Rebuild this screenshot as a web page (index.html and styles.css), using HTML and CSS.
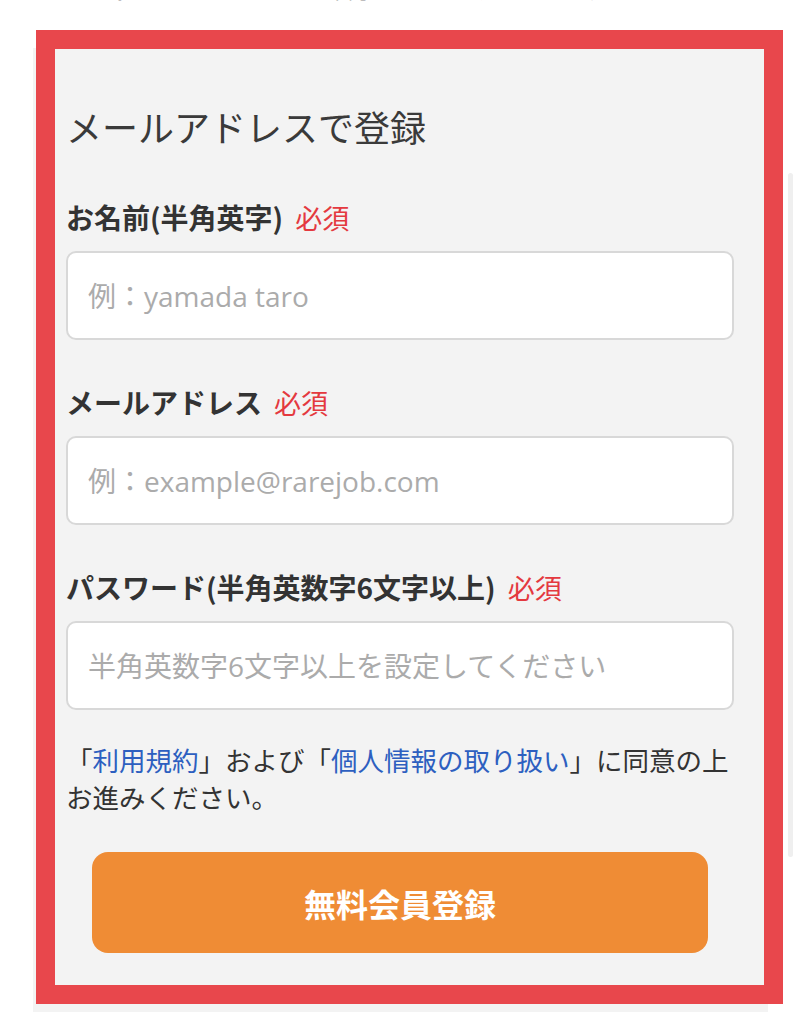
FILE: index.html
```html
<!DOCTYPE html>
<html lang="ja">
<head>
  <meta charset="UTF-8" />
  <meta name="viewport" content="width=device-width, initial-scale=1.0">
  <title>無料会員登録</title>

  <link rel="stylesheet" href="styles.css">
</head>
<body>
  <p class="lead">※ご登録のメールアドレスに確認メールをお送りします。</p>

  <section class="signup">
    <h2>メールアドレスで登録</h2>

    <form class="signup-form" onsubmit="return false;">
      <div class="field">
        <label for="name">お名前(半角英字)<span class="req">必須</span></label>
        <input type="text" id="name" placeholder="例：yamada taro">
      </div>
      <div class="field">
        <label for="email">メールアドレス<span class="req">必須</span></label>
        <input type="email" id="email" placeholder="例：example@rarejob.com">
      </div>
      <div class="field">
        <label for="password">パスワード(半角英数字6文字以上)<span class="req">必須</span></label>
        <input type="password" id="password" placeholder="半角英数字6文字以上を設定してください">
      </div>

      <p class="agree">「<a href="#">利用規約</a>」および「<a href="#">個人情報の取り扱い</a>」に同意の上お進みください。</p>

      <button type="submit" class="submit-button">無料会員登録</button>
    </form>
  </section>

  <!-- annotation frame and scroll track drawn over the page -->
  <div class="highlight"></div>
  <div class="scroll-track"></div>
</body>
</html>
```

FILE: styles.css
```css
* {
  box-sizing: border-box;
  margin: 0;
  padding: 0;
}

body {
  font-family: "Noto Sans CJK JP", "Noto Sans", sans-serif;
  background-color: #fff;
  color: #333;
  position: relative;
  height: 1012px;
  overflow: hidden;
}

.lead {
  margin: -24px 0 0 40px;
  font-size: 22px;
  line-height: 24px;
  color: #888;
}

.signup {
  margin: 48px 0 0 33px;
  width: 735px;
  background-color: #f3f3f3;
  padding: 53px 34px 80px 33px;
}

.signup h2 {
  font-size: 36px;
  font-weight: 400;
  line-height: 50px;
  color: #3a3a3a;
  margin-bottom: 46px;
}

.field {
  margin-bottom: 42px;
}

.field label {
  display: block;
  font-size: 28px;
  font-weight: 700;
  line-height: 40px;
  color: #333;
  margin-bottom: 13px;
}

.req {
  margin-left: 12px;
  font-size: 27px;
  font-weight: 400;
  color: #e4393f;
}

.field input {
  display: block;
  width: 100%;
  height: 89px;
  padding: 0 20px;
  font-family: "Open Sans", "Noto Sans CJK JP", sans-serif;
  font-size: 28px;
  color: #333;
  background-color: #fff;
  border: 2px solid #d8d8d8;
  border-radius: 10px;
  outline: none;
}

.field input::placeholder {
  color: #ababab;
}

.field:last-of-type {
  margin-bottom: 31px;
}

.agree {
  font-size: 26.5px;
  line-height: 37px;
  color: #333;
}

.agree a {
  color: #2d5fc0;
  text-decoration: none;
}

.submit-button {
  display: block;
  width: 616px;
  height: 101px;
  margin: 37px auto 0;
  font-family: "Noto Sans CJK JP", "Noto Sans", sans-serif;
  font-size: 32px;
  font-weight: 700;
  color: #fff;
  background-color: #ef8c35;
  border: none;
  border-radius: 16px;
  cursor: pointer;
}

.highlight {
  position: absolute;
  left: 36px;
  top: 30px;
  width: 747px;
  height: 974px;
  border: 19px solid #e8474c;
}

.scroll-track {
  position: absolute;
  left: 788px;
  top: 173px;
  width: 5px;
  height: 684px;
  background-color: #efefef;
  border-radius: 3px;
}
```
